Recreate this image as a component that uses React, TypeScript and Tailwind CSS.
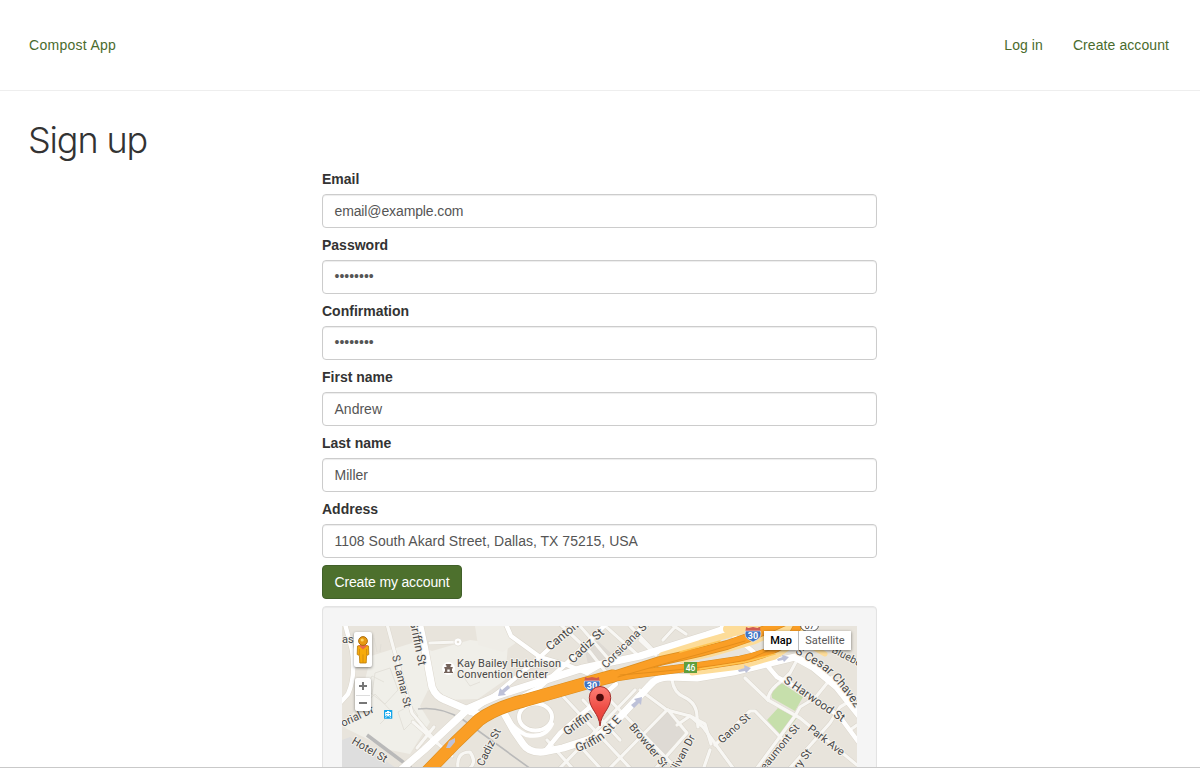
import React from "react";

type Field = { label: string; value: string; kind: "plain" | "email" | "dots" };

const fields: Field[] = [
  { label: "Email", value: "email@example.com", kind: "email" },
  { label: "Password", value: "••••••••", kind: "dots" },
  { label: "Confirmation", value: "••••••••", kind: "dots" },
  { label: "First name", value: "Andrew", kind: "plain" },
  { label: "Last name", value: "Miller", kind: "plain" },
  { label: "Address", value: "1108 South Akard Street, Dallas, TX 75215, USA", kind: "plain" },
];

const valueClass = {
  plain: "tracking-[0.01px]",
  email: "tracking-[-0.12px]",
  dots: "-mt-0.5",
};

const smallRoads = [
  "M387 624L394 650L402 677L412 713L437 743",
  "M430 643L457 642",
  "M560 624L590 652L612 680",
  "M603 624L640 657",
  "M580 626L612 663",
  "M630 626L655 652",
  "M560 693L630 768",
  "M607 697L676 768",
  "M547 740L572 768",
  "M578 744L600 768",
  "M583 700L620 740",
  "M635 690L560 768",
  "M667 710L610 768",
  "M640 690L667 710L690 716L703 727L733 768",
  "M672 680Q674 693 684 697Q697 703 697 717L698 727",
  "M668 710L687 733L656 768",
  "M677 725L690 716L705 724L711 744",
  "M715 745L750 711L755 711L783 740L778 748",
  "M710 750L703 770",
  "M745 678L768 700Q768 690 783 680",
  "M768 700L800 718L823 737L857 765",
  "M797 660L790 673L783 680",
  "M832 677L815 698L800 707L795 716L757 768",
  "M857 697L840 707L830 723L790 768",
  "M857 725L850 730",
  "M663 640L674 628M668 622L686 634",
  "M640 640L656 655",
  "M413 722L452 756M434 727L417 748M452 740L434 759",
  "M458 768Q456 752 470 752Q477 762 470 768",
];

const mainRoads = [
  "M345 624L352 650Q356 676 348 694L340 703",
  "M505 622L511 636L540 657L567 665L587 673",
  "M470 713L500 691L540 657L576 624",
  "M500 708L540 687L567 663L606 624",
  "M587 673L606 662L650 620",
  "M546 750L560 733L590 707L616 684",
  "M765 663L777 677L807 693L840 717L860 744",
  "M722 626L745 645L770 665",
];

const wideRoads = [
  "M419 622L425 650L432 687Q436 697 445 700L482 716",
  "M396 774L424 750L469 708L499 695L583 668L640 656L707 635L745 622",
  "M505 715L514 731L523 744Q529 753 543 752L563 748L597 737L620 717L650 685Q656 677 670 677L697 678L733 672L770 663L795 657L813 667L837 687L860 716",
];

const mainHighway = "M425 774L455 743L479 720Q495 708 523 701L583 684L613 676";
const upperHighway = "M610 677L660 661L700 652L727 645L747 638L765 630L785 621";
const lowerHighway = "M610 678Q635 674 660 671L700 666L740 660Q770 654 790 640L800 622";

const blocks = [
  "M585 651L598 641L613 655L606 667L588 664Z",
  "M650 726L668 710L685 732L663 757L640 742Z",
];

type Label = { id: string; d: string; text: string; size: number };

const labels: Label[] = [
  { id: "griffin-n", d: "M409.500 621L423 688", text: "Griffin St", size: 12 },
  { id: "lamar", d: "M392 656L408 723", text: "S Lamar St", size: 11 },
  { id: "canton", d: "M550 651L603 607", text: "Canton St", size: 12 },
  { id: "cadiz-n", d: "M573 664L628 611", text: "Cadiz St", size: 12 },
  { id: "corsicana", d: "M606 669L664 611", text: "Corsicana St", size: 11 },
  { id: "griffin-w", d: "M567 736L608 706", text: "Griffin", size: 12 },
  { id: "griffin-e", d: "M577 752Q598 746 612 731L640 700", text: "Griffin St E", size: 12 },
  { id: "browder", d: "M628.500 727L676 784", text: "Browder St", size: 11 },
  { id: "sullivan", d: "M674 777L706 718", text: "ullivan Dr", size: 11 },
  { id: "gano", d: "M722 744L761 709", text: "Gano St", size: 11 },
  { id: "cesar", d: "M795 653Q804 659 819 667Q837 678 864 722", text: "S Cesar Chavez", size: 12 },
  { id: "blueberry", d: "M831 652L885 680", text: "Blueberry", size: 10.5 },
  { id: "harwood", d: "M783 682L863 737", text: "S Harwood St", size: 11.7 },
  { id: "park", d: "M807 730L850 763", text: "Park Ave", size: 11 },
  { id: "beaumont", d: "M761 776L811 714", text: "Beaumont St", size: 10.8 },
  { id: "ceremony", d: "M799 770L829 730", text: "ry St", size: 11 },
  { id: "hotel", d: "M351 743L400 772", text: "Hotel St", size: 11 },
  { id: "memorial", d: "M343 727L385 707", text: "orial Dr", size: 11 },
  { id: "cadiz-s", d: "M483 767L509 715", text: "Cadiz St", size: 11 },
];

function Shield({ x, y }: { x: number; y: number }) {
  return (
    <g transform={`translate(${x} ${y})`}>
      <path d="M1 0L3.500 1L8 0L12.500 1L15 0L15.500 4L.5 4Z" fill="#cf5a50" />
      <path d="M.5 4H15.500Q17 10 12.500 12.500L8 15L3.500 12.500Q-1 10 .5 4Z" fill="#3f74c4" stroke="#e9eefa" strokeWidth=".6" />
      <text x="8" y="12.200" textAnchor="middle" fontSize="9" fontWeight="700" fill="#fff">30</text>
    </g>
  );
}

function StreetMap() {
  return (
    <svg
      className="block h-[142px] w-[515px] font-[Roboto,sans-serif]"
      viewBox="342 626 515 142"
      role="img"
      aria-label="Map of downtown Dallas"
    >
      <rect x="342" y="626" width="515" height="142" fill="#e8e4dc" />
      <path d="M342 740L350 737L396 768H342Z" fill="#dedede" />
      <path d="M371 656L412 643L432 651L470 640L508 645L505 680L478 699L445 700L428 690L420 706L430 722L410 754L390 750L345 728L360 700Z" fill="#f0efe9" />
      <path d="M475 626H506L517 642L503 652L478 645Z" fill="#efede7" />
      <g fill="none" stroke="#dfddd6" strokeWidth=".8">
        <path d="M375 673L390 668L398 690L385 704L372 694ZM398 712L411 705L418 716L404 730ZM362 706L375 694L392 712L380 724M372 694L364 690L372 676L384 682" />
        <path d="M374 638L377 652M380 652L381 644M460 672L470 686L480 682" />
      </g>
      {blocks.map((d) => (
        <path key={d} d={d} fill="#dedad4" />
      ))}
      <path d="M780 682L803 697L795 711L772 698L771 691Z" fill="#c6dfab" />
      <path d="M778 708L797 718L782 737L767 720Z" fill="#c6dfab" />
      <g fill="none" stroke="#b9b9b9" strokeLinejoin="round">
        <path d="M367 735L411 768" strokeWidth="3.500" />
        <path d="M418 709Q440 706 462 719L535 772" strokeWidth="1.600" />
      </g>
      <g fill="none" stroke="#dbd6cc" strokeLinecap="round" strokeLinejoin="round">
        {smallRoads.map((d) => (
          <path key={d} d={d} strokeWidth="4.200" />
        ))}
        {mainRoads.map((d) => (
          <path key={d} d={d} strokeWidth="5.400" />
        ))}
        {wideRoads.map((d) => (
          <path key={d} d={d} strokeWidth="8.200" />
        ))}
        <ellipse cx="535.500" cy="717" rx="16.500" ry="13.500" strokeWidth="5" />
      </g>
      <g fill="none" stroke="#f8f7f4" strokeLinecap="round" strokeLinejoin="round">
        {smallRoads.map((d) => (
          <path key={d} d={d} strokeWidth="3.200" />
        ))}
      </g>
      <circle cx="458" cy="642" r="4" fill="#fff" stroke="#dbd6cc" strokeWidth=".6" />
      <circle cx="458" cy="642" r="1.300" fill="#e4e0d8" />
      <g fill="none" stroke="#ffffff" strokeLinecap="round" strokeLinejoin="round">
        {mainRoads.map((d) => (
          <path key={d} d={d} strokeWidth="4.400" />
        ))}
        {wideRoads.map((d) => (
          <path key={d} d={d} strokeWidth="7.200" />
        ))}
        <ellipse cx="535.500" cy="717" rx="16.500" ry="13.500" strokeWidth="4" />
        <path d="M503 713Q513 729 526 735Q545 739 552 724" strokeWidth="4" />
      </g>
      <g fill="none" strokeLinecap="round" strokeLinejoin="round">
        <g stroke="#fddc98">
          <path d="M662 655L700 643L745 630L765 622" strokeWidth="6" />
          <path d="M682 660L710 654L755 641L785 628" strokeWidth="6" />
          <path d="M692 673L740 667L775 657L800 640L825 654" strokeWidth="5" />
          <path d="M727 629H800" strokeWidth="8" />
        </g>
        <g stroke="#db8d1e">
          <path d={lowerHighway} strokeWidth="8.800" />
          <path d={upperHighway} strokeWidth="9.800" />
          <path d={mainHighway} strokeWidth="13.200" />
        </g>
        <g stroke="#fa9e25">
          <path d={lowerHighway} strokeWidth="7.600" />
          <path d={upperHighway} strokeWidth="8.400" />
          <path d={mainHighway} strokeWidth="12" />
        </g>
        <path d="M618 677L660 665L700 654L745 641" stroke="#e58e1b" strokeWidth="1" />
        <path d="M620 675Q720 667 750 659L780 645" stroke="#e58e1b" strokeWidth="1" />
        <path d="M700 669L745 662L775 654" stroke="#ffc552" strokeWidth="1.600" />
        <path d="M680 652L720 641" stroke="#ffc552" strokeWidth="1.600" />
      </g>
      <g fill="#bdc1d8">
        <path d="M498 696L500 688L502 690L508 685L510 688L504 693L506 695Z" />
        <path d="M642 697L634 699L636 701L631 705L634 708L639 703L641 705Z" />
        <path d="M751 668L744 665L744.500 668L738 670L739 672L745 671L746 673Z" />
        <path d="M446 748L449 741L455 738L455 742L450 748Z" />
        <path d="M789 657L782 655L782.500 657L777 659L778 661L783 660L784 662Z" />
      </g>

      <rect x="684" y="662" width="13" height="11" fill="#5f9e3e" />
      <text x="690.500" y="670.700" textAnchor="middle" fontSize="8.500" fontWeight="500" fill="#fff">46</text>
      <Shield x={584} y={677} />
      <Shield x={745} y={627} />
      <rect x="800.500" y="616.500" width="18" height="14.500" rx="6" fill="#fff" stroke="#555" />
      <text x="809.500" y="628.500" textAnchor="middle" fontSize="9" fill="#333">67</text>

      <g fill="#484848" stroke="#f4f1eb" strokeWidth="2" paintOrder="stroke" strokeLinejoin="round">
        {labels.map((l) => (
          <g key={l.id}>
            <path id={l.id} d={l.d} fill="none" stroke="none" />
            <text fontSize={l.size}>
              <textPath href={`#${l.id}`}>{l.text}</textPath>
            </text>
          </g>
        ))}
        <g fontSize="11">
          <text x="342" y="643">as</text>
          <text x="457" y="667" textLength="104">Kay Bailey Hutchison</text>
          <text x="457" y="677.700" textLength="91">Convention Center</text>
        </g>
      </g>

      <circle cx="448.500" cy="668.500" r="6.500" fill="#fff" />
      <path d="M444 673V671.800H445V668.500H444.300V667H446.500V665.500H445.800V664H451.200V665.500H450.500V667H452.700V668.500H452V671.800H453V673ZM447.300 671.800H449.700V669.500H447.300Z" fill="#74635b" fillRule="evenodd" />
      <g>
        <rect x="384" y="710" width="8.300" height="8.800" rx=".6" fill="#14a5ea" />
        <path d="M385.200 712H391V716.300H385.200ZM387 711H389.300V712H387Z" fill="#fff" />
        <path d="M386.200 713H387.600V714H386.200ZM388.600 713H390V714H388.600ZM386.200 715H387.200V715.800H386.200ZM389 715H390V715.800H389Z" fill="#14a5ea" />
        <path d="M385.500 718L386.500 716.500M390.700 718L389.700 716.500" fill="none" stroke="#fff" strokeWidth=".8" />
      </g>

      <path d="M600 726C599 713 589.300 709 589.300 697.500A10.700 11 0 0 1 610.700 697.500C610.700 709 601 713 600 726Z" fill="url(#pin)" stroke="#a3302c" strokeWidth="1" />
      <circle cx="600" cy="697.500" r="3.800" fill="#4d0b0b" />
      <defs>
        <linearGradient id="pin" x1="0" y1="0" x2="0" y2="1">
          <stop offset="0" stopColor="#ff8076" />
          <stop offset=".55" stopColor="#ee4d45" />
          <stop offset="1" stopColor="#e53c35" />
        </linearGradient>
      </defs>
    </svg>
  );
}

function Pegman() {
  return (
    <svg className="h-7 w-[14px]" viewBox="0 0 14 28">
      <path d="M1.500 10Q7 7.500 12.500 10L12.800 18.500L10.600 19.500L10.200 27H3.800L3.400 19.500L1.200 18.500Z" fill="#f7ab0a" stroke="#b8780a" strokeWidth=".8" />
      <path d="M2.500 9.500Q7 7.500 11.500 9.500L7 13.500Z" fill="#ea6a4c" />
      <path d="M7 18.500V27M3.500 13V19M10.500 13V19" stroke="#c98510" strokeWidth=".7" />
      <circle cx="7" cy="5" r="4.400" fill="#e89a12" stroke="#a3660a" strokeWidth=".9" />
      <circle cx="6.200" cy="4" r="1.600" fill="#ffd560" />
    </svg>
  );
}

export default function App() {
  return (
    <div className="relative h-[768px] w-full overflow-hidden bg-white font-['Liberation_Sans',Arial,sans-serif] text-sm leading-5 text-[#333]">
      <header className="flex h-[91px] items-center justify-between border-b border-[#eee] pr-[31px] pl-[29px] text-[#4a6b2d]">
        <a className="tracking-[0.28px]">Compost App</a>
        <nav className="flex gap-[30px] tracking-[0.08px]">
          <a>Log in</a>
          <a>Create account</a>
        </nav>
      </header>

      <main>
        <h1 className="mt-[29px] ml-[28px] h-[41px] font-[Inter,sans-serif] text-[36px] leading-[40px] font-[340] tracking-[-1.15px]">
          Sign up
        </h1>
        <form className="mt-2 ml-[322px] w-[555px]">
          {fields.map((f) => (
            <div key={f.label} className="mb-[7px]">
              <label className="mb-[5px] block font-bold">{f.label}</label>
              <div className="flex h-[34px] items-center rounded border border-[#ccc] px-[11.5px] text-[#555] shadow-[inset_0_1px_1px_rgba(0,0,0,0.075)]">
                <span className={valueClass[f.kind]}>{f.value}</span>
              </div>
            </div>
          ))}
          <button
            type="button"
            className="block h-[34px] w-[140px] rounded border border-[#41602a] bg-[#4d702d] tracking-[-0.15px] text-white"
          >
            Create my account
          </button>
          <div className="mt-[7px] h-[220px] rounded border border-[#e3e3e3] bg-[#f5f5f5] p-[19px] shadow-[inset_0_1px_1px_rgba(0,0,0,0.05)]">
            <div className="relative h-[142px] w-[515px] overflow-hidden">
              <StreetMap />
              <div className="absolute top-[6px] left-[12px] flex h-[35px] w-[18px] items-center justify-center rounded-[2px] bg-white shadow-[0_1px_3px_rgba(0,0,0,0.45)]">
                <Pegman />
              </div>
              <div className="absolute top-[52px] left-[13px] h-[33px] w-[16px] rounded-[2px] bg-white shadow-[0_1px_3px_rgba(0,0,0,0.45)]">
                <svg className="h-[33px] w-[16px]" viewBox="0 0 16 33">
                  <path d="M4 8H12M8 4V12M4 25H12" stroke="#777" strokeWidth="2" />
                  <path d="M1 17.500H15" stroke="#ddd" />
                </svg>
              </div>
              <div className="absolute top-[5px] left-[422px] flex h-[19px] font-[Roboto,sans-serif] text-[11px] leading-[19px] shadow-[0_1px_3px_rgba(0,0,0,0.5)]">
                <span className="w-[34px] bg-white text-center font-medium text-black">Map</span>
                <span className="w-[53px] border-l border-[#bbb] bg-white text-center text-[#565656]">Satellite</span>
              </div>
            </div>
          </div>
        </form>
      </main>
      <div className="absolute inset-x-0 bottom-0 h-px bg-[#c9c9c9]" />
    </div>
  );
}
